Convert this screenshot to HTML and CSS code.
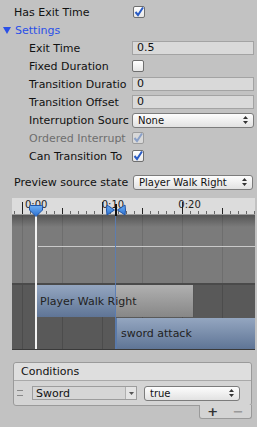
FILE: index.html
```html
<!DOCTYPE html>
<html lang="en">
  <head>
    <meta charset="UTF-8" />
    <title>Transition</title>
    <link rel="stylesheet" href="styles.css">
  </head>
  <body>
    <div class="inspector">
      <div class="row">
        <span class="label">Has Exit Time</span>
        <span class="check"><svg width="10" height="10" viewBox="0 0 10 10"><path d="M1.5 5 L4 8 L9 0.5" fill="none" stroke="#2a5cc4" stroke-width="2"/></svg></span>
      </div>
      <div class="row foldout">
        <svg class="fold-arrow" width="8" height="7" viewBox="0 0 8 7"><path d="M0 0 H8 L4 7 Z" fill="#2a50e8"/></svg>
        Settings
      </div>
      <div class="row sub">
        <span class="label">Exit Time</span>
        <span class="field">0.5</span>
      </div>
      <div class="row sub">
        <span class="label">Fixed Duration</span>
        <span class="check"></span>
      </div>
      <div class="row sub">
        <span class="label">Transition Duratio</span>
        <span class="field">0</span>
      </div>
      <div class="row sub">
        <span class="label">Transition Offset</span>
        <span class="field">0</span>
      </div>
      <div class="row sub">
        <span class="label">Interruption Sourc</span>
        <span class="popup"><span>None</span><svg width="5" height="8" viewBox="0 0 5 8"><path d="M0 3 L2.5 0 L5 3 Z M0 5 L2.5 8 L5 5 Z" fill="#333"/></svg></span>
      </div>
      <div class="row sub disabled">
        <span class="label">Ordered Interrupt</span>
        <span class="check"><svg width="10" height="10" viewBox="0 0 10 10"><path d="M1.5 5 L4 8 L9 0.5" fill="none" stroke="#8aa0c8" stroke-width="2"/></svg></span>
      </div>
      <div class="row sub">
        <span class="label">Can Transition To</span>
        <span class="check"><svg width="10" height="10" viewBox="0 0 10 10"><path d="M1.5 5 L4 8 L9 0.5" fill="none" stroke="#2a5cc4" stroke-width="2"/></svg></span>
      </div>

      <div class="row preview">
        <span class="label">Preview source state</span>
        <span class="popup wide"><span>Player Walk Right</span><svg width="5" height="8" viewBox="0 0 5 8"><path d="M0 3 L2.5 0 L5 3 Z M0 5 L2.5 8 L5 5 Z" fill="#333"/></svg></span>
      </div>

      <div class="timeline">
        <div class="ruler">
          <span>0:00</span><span>0:10</span><span>0:20</span>
        </div>
        <div class="graph"><div class="curve"></div></div>
        <div class="track first">
          <div class="clip source">Player Walk Right</div>
        </div>
        <div class="track second">
          <div class="clip dest">sword attack</div>
        </div>

        <div class="playhead">
          <svg width="14" height="12" viewBox="0 0 14 12"><defs><linearGradient id="pg" x1="0" y1="0" x2="0" y2="1"><stop offset="0" stop-color="#6fb0f5"/><stop offset="1" stop-color="#2a6fd0"/></linearGradient></defs><path d="M1.5 0.5 H12.5 Q13.5 0.5 13.5 1.5 V5 L7 11.5 L0.5 5 V1.5 Q0.5 0.5 1.5 0.5 Z" fill="url(#pg)" stroke="#1f55a8"/></svg>
        </div>
        <div class="trans-mark">
          <svg width="20" height="12" viewBox="0 0 20 12"><defs><linearGradient id="bg" x1="0" y1="0" x2="0" y2="1"><stop offset="0" stop-color="#6fb0f5"/><stop offset="1" stop-color="#2a6fd0"/></linearGradient></defs><path d="M1 1 Q0 6 1 11 L8.5 6 Z" fill="url(#bg)" stroke="#1f55a8"/><path d="M19 1 Q20 6 19 11 L11.5 6 Z" fill="url(#bg)" stroke="#1f55a8"/><rect x="9" y="0" width="2" height="12" fill="#111"/></svg>
        </div>
      </div>

      <div class="conditions">
        <div class="cond-head">Conditions</div>
        <div class="cond-body">
          <span class="handle"></span>
          <span class="param"><span>Sword</span><span class="param-arrow"><svg width="5" height="3" viewBox="0 0 5 3"><path d="M0 0 H5 L2.5 3 Z" fill="#555"/></svg></span></span>
          <span class="popup small"><span>true</span><svg width="5" height="8" viewBox="0 0 5 8"><path d="M0 3 L2.5 0 L5 3 Z M0 5 L2.5 8 L5 5 Z" fill="#333"/></svg></span>
        </div>
      </div>
      <div class="cond-foot"><span class="plus">+</span><span class="minus">−</span></div>
    </div>
  </body>
</html>
```

FILE: styles.css
```css
body {
  margin: 0;
  background: #c2c2c2;
  font-family: "DejaVu Sans", sans-serif;
  font-size: 11px;
  color: #111;
  width: 257px;
  overflow: hidden;
}
.inspector {
  padding-top: 3px;
}
.row {
  display: flex;
  align-items: center;
  height: 18px;
  padding-left: 14px;
}
.row.sub {
  padding-left: 29px;
}
.label {
  flex: none;
  width: 119px;
  white-space: nowrap;
}
.sub .label {
  width: 103px;
}
.foldout {
  padding-left: 3px;
  color: #2a50e8;
}
.fold-arrow {
  margin-right: 4px;
}
.disabled .label {
  color: #6e6e6e;
}
.check {
  width: 12px;
  height: 12px;
  box-sizing: border-box;
  border: 1px solid #6f6f6f;
  border-radius: 2px;
  background: linear-gradient(#ffffff, #e6e6e6);
  display: flex;
  align-items: center;
  justify-content: center;
}
.disabled .check {
  border-color: #9c9c9c;
  background: #d8d8d8;
}
.field {
  width: 122px;
  height: 14px;
  box-sizing: border-box;
  background: #d9d9d9;
  border: 1px solid #a3a3a3;
  padding-left: 4px;
  line-height: 12px;
}
.popup {
  width: 122px;
  height: 15px;
  box-sizing: border-box;
  border: 1px solid #7c7c7c;
  border-radius: 3px;
  background: linear-gradient(#fdfdfd, #e2e2e2);
  font-size: 10px;
  display: flex;
  align-items: center;
  justify-content: space-between;
  padding: 0 5px 0 5px;
}
.preview {
  margin-top: 8px;
}
.popup.wide {
  width: 120px;
}

.timeline {
  position: relative;
  margin: 7px 2px 0 12px;
  width: 243px;
  background-color: #595959;
  background-image: linear-gradient(to right, rgba(0, 0, 0, 0.14) 1px, transparent 1px);
  background-size: 40px 100%;
  background-position: 10px 0;
  border-bottom: 1px solid #3a3a3a;
}
.ruler {
  height: 17px;
  box-sizing: border-box;
  display: flex;
  padding-left: 13px;
  font-size: 10px;
  color: #222;
  background-color: #dcdcdc;
  background-image: linear-gradient(to right, #222 1px, transparent 1px),
    linear-gradient(to right, #222 1px, transparent 1px),
    linear-gradient(to right, #666 1px, transparent 1px);
  background-size: 80px 12px, 40px 6px, 8px 3px;
  background-repeat: repeat-x;
  background-position: 10px 100%, 10px 100%, 10px 100%;
  border-bottom: 1px solid #9a9a9a;
}
.ruler span {
  width: 80px;
  line-height: 14px;
}
.graph {
  height: 68px;
  background-image: linear-gradient(to right, rgba(0, 0, 0, 0.1) 1px, transparent 1px),
    linear-gradient(#555555, #7b7b7b 12px);
  background-size: 40px 100%, 100% 100%;
  background-position: 10px 0, 0 0;
  border-bottom: 2px solid #4a4a4a;
  position: relative;
}
.curve {
  position: absolute;
  left: 26px;
  right: 0;
  top: 31px;
  height: 1px;
  background: #c9c9c9;
}
.track {
  display: flex;
}
.track.first {
  height: 32px;
  padding-left: 25px;
  margin-bottom: 1px;
}
.track.second {
  height: 31px;
  padding-left: 104px;
}
.clip {
  display: flex;
  align-items: center;
  height: 100%;
  box-sizing: border-box;
  white-space: nowrap;
  font-size: 11px;
  color: #222;
}
.clip.source {
  width: 157px;
  padding-left: 3px;
  background-image: linear-gradient(#94a6c0, #5f7596), linear-gradient(#b0b0b0, #878787);
  background-size: 79px 100%, 100% 100%;
  background-repeat: no-repeat;
  border-right: 1px solid #555;
}
.clip.dest {
  width: 139px;
  padding-left: 4px;
  background: linear-gradient(#94a6c0, #5f7596);
  border-left: 1px solid #5a7aa8;
}
.playhead {
  position: absolute;
  left: 17px;
  top: 7px;
  bottom: 0;
  width: 14px;
  background: linear-gradient(#f2f2f2, #f2f2f2) no-repeat 6px 10px / 2px 100%;
}
.playhead svg {
  display: block;
}
.trans-mark {
  position: absolute;
  left: 94px;
  top: 6px;
  bottom: 0;
  width: 20px;
  background: linear-gradient(rgba(90, 125, 180, 0.9), rgba(90, 125, 180, 0.9)) no-repeat 9px 12px / 1px 100%;
}
.trans-mark svg {
  display: block;
}

.conditions {
  margin: 12px 5px 0 13px;
  border: 1px solid #9a9a9a;
  border-radius: 3px;
  background: #d4d4d4;
}
.cond-head {
  height: 17px;
  line-height: 17px;
  padding-left: 7px;
  background: #dedede;
  border-bottom: 1px solid #a9a9a9;
  border-radius: 3px 3px 0 0;
}
.cond-body {
  height: 24px;
  display: flex;
  align-items: center;
  padding-left: 3px;
}
.handle {
  width: 6px;
  height: 4px;
  border-top: 1px solid #888;
  border-bottom: 1px solid #888;
  margin-right: 9px;
}
.param {
  width: 105px;
  height: 14px;
  box-sizing: border-box;
  border: 1px solid #9d9d9d;
  background: #d6d6d6;
  display: flex;
  align-items: center;
  justify-content: space-between;
  padding-left: 3px;
  font-size: 11px;
}
.param-arrow {
  width: 10px;
  height: 100%;
  border-left: 1px solid #b0b0b0;
  background: #e4e4e4;
  display: flex;
  align-items: center;
  justify-content: center;
}
.popup.small {
  width: 96px;
  margin-left: 7px;
}
.cond-foot {
  margin: -1px 5px 0 199px;
  width: 53px;
  height: 14px;
  box-sizing: border-box;
  border: 1px solid #9a9a9a;
  border-top: none;
  border-radius: 0 0 3px 3px;
  background: #d4d4d4;
  display: flex;
  justify-content: space-around;
  align-items: center;
  font-size: 13px;
  font-weight: bold;
  line-height: 12px;
}
.plus {
  color: #333;
}
.minus {
  color: #999;
}
```
